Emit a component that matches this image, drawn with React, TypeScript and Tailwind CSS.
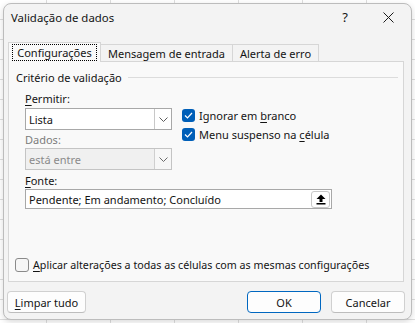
import React from "react";

const Chevron = ({ color = "#5c5c5c" }: { color?: string }) => (
  <svg width="9" height="5" viewBox="0 0 9 5" fill="none">
    <polyline points="0.5,0.5 4.5,4.5 8.5,0.5" stroke={color} strokeWidth="1" />
  </svg>
);

const Check = () => (
  <svg width="9" height="7" viewBox="0 0 9 7" fill="none">
    <polyline points="1,3.5 3.5,6 8,1" stroke="#ffffff" strokeWidth="1.2" />
  </svg>
);

const UploadIcon = () => (
  <svg width="10" height="11" viewBox="0 0 10 11">
    <path d="M5 0.5 L9.5 5 L6.5 5 L6.5 8 L3.5 8 L3.5 5 L0.5 5 Z" fill="#000" />
    <rect x="0.5" y="9" width="9" height="1.5" fill="#000" />
  </svg>
);

export default function App() {
  return (
    <div className="w-[415px] h-[323px] overflow-hidden bg-white bg-[linear-gradient(to_right,#dedede_1px,transparent_1px),linear-gradient(to_bottom,#dedede_1px,transparent_1px)] bg-[size:64px_20px] bg-[position:46px_19px] font-['Noto_Sans',sans-serif] text-[11px] text-[#141414] leading-none whitespace-nowrap pt-[3px] pl-[3px]">
      <div className="w-[409px] h-[317px] rounded-[8px] border border-[#bcbcbc] bg-[#f3f3f3] shadow-[0_2px_6px_rgba(0,0,0,0.15)] flex flex-col">
        {/* Title bar */}
        <div className="h-[27px] flex items-center pl-[7px] pr-[17px]">
          <span className="text-[11.4px]">Validação de dados</span>
          <span className="ml-auto text-[13px]">?</span>
          <svg className="ml-[35px]" width="11" height="11" viewBox="0 0 11 11">
            <path d="M0.5 0.5 L10.5 10.5 M10.5 0.5 L0.5 10.5" stroke="#1b1b1b" strokeWidth="1" />
          </svg>
        </div>

        {/* Tabs */}
        <div className="mt-[11px] pl-[4px] h-[20px] flex items-end -mb-px">
          <div className="relative z-10 w-[93px] h-[20px] bg-[#f9f9f9] border border-b-0 border-[#d6d6d6] flex items-start justify-center pt-px">
            <span className="w-[85px] h-[17px] border border-dotted border-black flex items-center justify-center">
              Configurações
            </span>
          </div>
          <div className="w-[132px] h-[18px] border border-b-0 border-l-0 border-[#d6d6d6] flex items-center justify-center">
            Mensagem de entrada
          </div>
          <div className="w-[86px] h-[18px] border border-b-0 border-l-0 border-[#d6d6d6] flex items-center justify-center">
            Alerta de erro
          </div>
        </div>

        {/* Panel */}
        <div className="ml-[4px] w-[396px] h-[221px] bg-[#f9f9f9] border border-[#d6d6d6] flex flex-col">
          <div className="mt-[7px] pl-[7px] h-[16px] flex items-center">
            <span>Critério de validação</span>
            <div className="flex-1 h-px bg-[#dcdcdc] ml-[6px] mr-[5px]" />
          </div>

          <div className="pl-[16px] mt-[5px] flex">
            <div className="w-[147px] flex flex-col">
              <div className="h-[16px] flex items-center">
                <span><span className="underline underline-offset-2">P</span>ermitir:</span>
              </div>
              <div className="mt-[2px] h-[22px] bg-white border border-[#a8a8a8] flex">
                <div className="flex-1 flex items-center pl-[3px]">Lista</div>
                <div className="w-[17px] border-l border-[#c8c8c8] flex items-center justify-center">
                  <Chevron />
                </div>
              </div>
              <div className="mt-px h-[16px] flex items-center text-[#7c7c7c]">Dados:</div>
              <div className="mt-px h-[22px] bg-[#f0f0f0] border border-[#c4c4c4] flex text-[#8a8a8a]">
                <div className="flex-1 flex items-center pl-[3px]">está entre</div>
                <div className="w-[17px] border-l border-[#cfcfcf] bg-[#f7f7f7] flex items-center justify-center">
                  <Chevron color="#6a6a6a" />
                </div>
              </div>
            </div>

            <div className="ml-[10px] pt-[17px] flex flex-col gap-[3px]">
              <div className="h-[16px] flex items-center">
                <div className="w-[13px] h-[13px] rounded-[3px] bg-[#005fb8] flex items-center justify-center">
                  <Check />
                </div>
                <span className="ml-[4px]">
                  Ignorar em <span className="underline underline-offset-2">b</span>ranco
                </span>
              </div>
              <div className="h-[16px] flex items-center">
                <div className="w-[13px] h-[13px] rounded-[3px] bg-[#005fb8] flex items-center justify-center">
                  <Check />
                </div>
                <span className="ml-[4px]">
                  Menu suspenso na <span className="underline underline-offset-2">c</span>élula
                </span>
              </div>
            </div>
          </div>

          <div className="pl-[16px] mt-[2px] h-[16px] flex items-center">
            <span><span className="underline underline-offset-2">F</span>onte:</span>
          </div>
          <div className="ml-[16px] mt-px w-[307px] h-[20px] bg-white border border-[#a8a8a8] flex items-center pl-[3px] pr-px">
            <span className="flex-1">Pendente; Em andamento; Concluído</span>
            <div className="w-[19px] h-[17px] rounded-[3px] border border-[#c8c8c8] bg-white flex items-center justify-center">
              <UploadIcon />
            </div>
          </div>

          <div className="mt-auto mb-[8px] pl-[6px] h-[16px] flex items-center">
            <div className="w-[14px] h-[14px] rounded-[3px] border border-[#8a8a8a] bg-[#f6f6f6]" />
            <span className="ml-[4px] text-[10.7px]">
              <span className="underline underline-offset-2">A</span>plicar alterações a todas as células com as mesmas configurações
            </span>
          </div>
        </div>

        {/* Buttons */}
        <div className="mt-[9px] pl-[3px] pr-[6px] flex">
          <div className="w-[79px] h-[22px] rounded-[4px] border border-[#d0d0d0] border-b-[#bdbdbd] bg-[#fdfdfd] flex items-center justify-center">
            <span><span className="underline underline-offset-2">L</span>impar tudo</span>
          </div>
          <div className="ml-auto w-[74px] h-[22px] rounded-[4px] border border-[#0067c0] bg-[#fdfdfd] flex items-center justify-center">
            OK
          </div>
          <div className="ml-[10px] w-[74px] h-[22px] rounded-[4px] border border-[#d0d0d0] border-b-[#bdbdbd] bg-[#fdfdfd] flex items-center justify-center">
            Cancelar
          </div>
        </div>
      </div>
    </div>
  );
}
